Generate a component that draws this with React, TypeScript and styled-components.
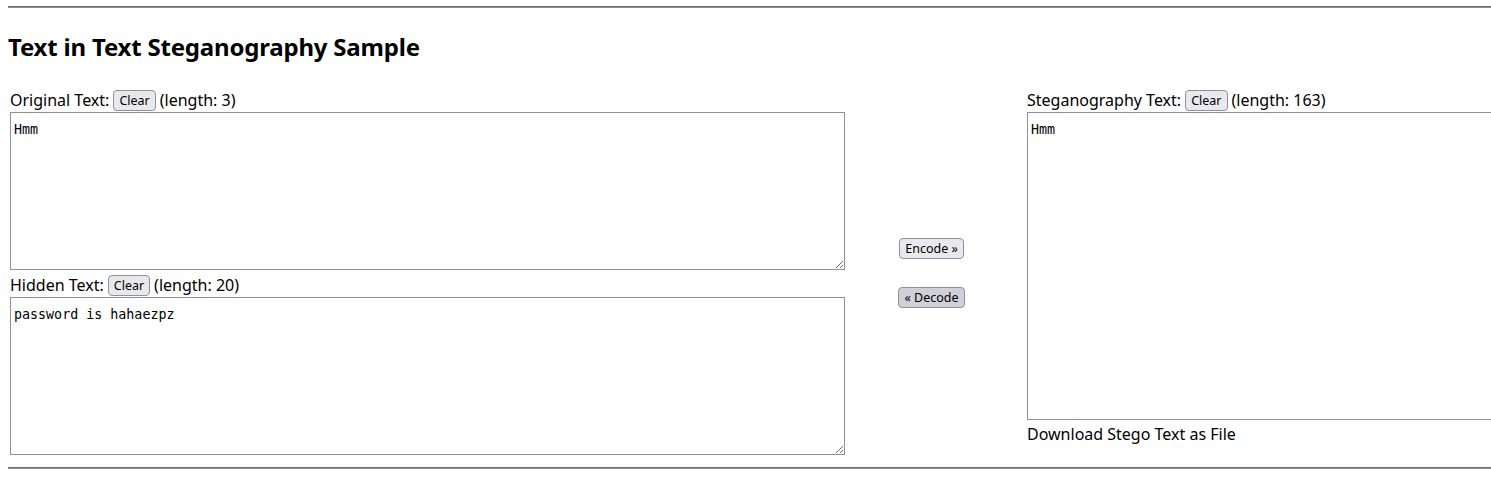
import React, { useState } from "react";
import styled, { createGlobalStyle } from "styled-components";

const Global = createGlobalStyle`
  html, body { margin: 0; padding: 0; background: #fff; }
  body {
    padding: 0 0 0 8px;
    font-family: "Noto Sans", "Open Sans", sans-serif;
    font-size: 16px;
    color: #000;
    overflow: hidden;
  }
`;

const Page = styled.div`
  width: 1483px;
`;

const Rule = styled.hr<{ $top: number }>`
  margin: ${(p) => p.$top}px 0 0 0;
  border: none;
  border-top: 1px solid #6e6e6e;
  border-bottom: 1px solid #8a8a8a;
  height: 0;
`;

const Title = styled.h2`
  margin: 24px 0 0 0;
  font-size: 24px;
  font-weight: 700;
  line-height: 30px;
  letter-spacing: -0.2px;
`;

const Layout = styled.div`
  display: grid;
  grid-template-columns: 835px 178px 500px;
  column-gap: 2px;
  margin: 27px 0 0 2px;
  align-items: start;
`;

const Column = styled.div`
  display: flex;
  flex-direction: column;
`;

const LabelRow = styled.div`
  display: flex;
  align-items: center;
  gap: 4px;
  height: 22px;
  white-space: nowrap;
`;

const SmallButton = styled.button<{ $pressed?: boolean }>`
  font-family: "Noto Sans", "Open Sans", sans-serif;
  font-size: 12.5px;
  line-height: 15px;
  padding: 2px 5px;
  color: #000;
  background: ${(p) => (p.$pressed ? "#d0d0d7" : "#e9e9ed")};
  border: 1px solid #8f8f9d;
  border-radius: 4px;
  cursor: pointer;
`;

const Area = styled.textarea<{ $h: number }>`
  box-sizing: border-box;
  width: 100%;
  height: ${(p) => p.$h}px;
  margin: 1px 0 0 0;
  padding: 9px 3px 4px;
  border: 1px solid #8f8f9d;
  font-family: "DejaVu Sans Mono", "Liberation Mono", monospace;
  font-size: 13.33px;
  line-height: 16px;
  color: #000;
  resize: both;
  outline: none;
`;

const Middle = styled.div`
  display: flex;
  flex-direction: column;
  align-items: center;
  gap: 28px;
  padding-top: 149px;
  padding-right: 9px;
`;

const Gap = styled.div`
  height: 4px;
`;

const Note = styled.div`
  margin-top: 3px;
  line-height: 22px;
`;

export default function App() {
  const [orig, setOrig] = useState("Hmm");
  const [hidden, setHidden] = useState("password is hahaezpz");
  const [stego, setStego] = useState("Hmm");
  return (
    <Page>
      <Global />
      <Rule $top={6} />
      <Title>Text in Text Steganography Sample</Title>
      <Layout>
        <Column>
          <LabelRow>
            Original Text: <SmallButton onClick={() => setOrig("")}>Clear</SmallButton> (length: 3)
          </LabelRow>
          <Area $h={158} value={orig} onChange={(e) => setOrig(e.target.value)} />
          <Gap />
          <LabelRow>
            Hidden Text: <SmallButton onClick={() => setHidden("")}>Clear</SmallButton> (length: 20)
          </LabelRow>
          <Area $h={158} value={hidden} onChange={(e) => setHidden(e.target.value)} />
        </Column>
        <Middle>
          <SmallButton>Encode »</SmallButton>
          <SmallButton $pressed>« Decode</SmallButton>
        </Middle>
        <Column>
          <LabelRow>
            Steganography Text: <SmallButton onClick={() => setStego("")}>Clear</SmallButton> (length: 163)
          </LabelRow>
          <Area $h={308} value={stego} onChange={(e) => setStego(e.target.value)} />
          <Note>Download Stego Text as File</Note>
        </Column>
      </Layout>
      <Rule $top={12} />
    </Page>
  );
}
